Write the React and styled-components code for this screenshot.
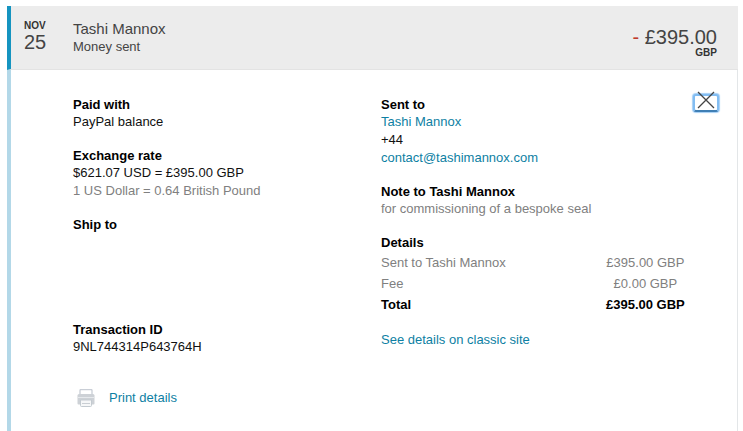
import React from 'react';
import styled, { createGlobalStyle } from 'styled-components';

const costs = [
    { label: 'Sent to Tashi Mannox', amount: '£395.00 GBP' },
    { label: 'Fee', amount: '£0.00 GBP' },
    { label: 'Total', amount: '£395.00 GBP', total: true },
];

const PrintIcon = () => (
    <svg width="18" height="18" viewBox="0 0 18 18" fill="none" aria-hidden="true">
        <path d="M3 5V1.5Q3 .5 4 .5H14Q15 .5 15 1.5V5" stroke="#c9ced6" strokeWidth="1.3" />
        <path d="M2 5H16Q17.5 5 17.5 6.5V14.5Q17.5 15.5 16.5 15.5H1.5Q.5 15.5 .5 14.5V6.5Q.5 5 2 5Z" fill="#cdd1d6" />
        <path d="M1 8.5H17" stroke="#e6e9ec" />
        <path d="M3.5 11H14.5V16.5Q14.5 17.5 13.5 17.5H4.5Q3.5 17.5 3.5 16.5Z" fill="#f6f7f8" stroke="#c3cad0" />
        <path d="M5 14.5H13" stroke="#c9ced3" />
    </svg>
);

const CloseIcon = () => (
    <svg width="18" height="18" viewBox="0 0 18 18" fill="none" aria-hidden="true">
        <path d="M1 1L17 17M17 1L1 17" stroke="#444" strokeWidth="1.3" />
    </svg>
);

const App = () => {
    return (
        <React.Fragment>
            <GlobalStyle />
            <Card>
                <Header>
                    <DateBox dateTime="11-25">
                        <Month>NOV</Month>
                        <Day>25</Day>
                    </DateBox>
                    <Summary>
                        <Name>Tashi Mannox</Name>
                        <Status>Money sent</Status>
                    </Summary>
                    <Amount>
                        <Price><Minus>-</Minus> £395.00</Price>
                        <Currency>GBP</Currency>
                    </Amount>
                </Header>
                <Body>
                    <Column>
                        <Block>
                            <Title>Paid with</Title>
                            <Text>PayPal balance</Text>
                        </Block>
                        <Block>
                            <Title>Exchange rate</Title>
                            <Text>$621.07 USD = £395.00 GBP</Text>
                            <Text $muted>1 US Dollar = 0.64 British Pound</Text>
                        </Block>
                        <AddressBlock>
                            <Title>Ship to</Title>
                        </AddressBlock>
                        <Block>
                            <Title>Transaction ID</Title>
                            <Text>9NL744314P643764H</Text>
                        </Block>
                        <PrintLink href="#print">
                            <PrintIcon />
                            Print details
                        </PrintLink>
                    </Column>
                    <Column>
                        <Block>
                            <Title>Sent to</Title>
                            <Text><Link href="#profile">Tashi Mannox</Link></Text>
                            <Text>+44</Text>
                            <Text><Link href="mailto:contact@tashimannox.com">contact@tashimannox.com</Link></Text>
                        </Block>
                        <Block>
                            <Title>Note to Tashi Mannox</Title>
                            <Text $muted>for commissioning of a bespoke seal</Text>
                        </Block>
                        <Block>
                            <Title>Details</Title>
                            <CostTable>
                                <tbody>
                                    {costs.map((cost) => (
                                        <CostRow key={cost.label} $total={cost.total}>
                                            <CostLabel scope="row">{cost.label}</CostLabel>
                                            <CostValue>{cost.amount}</CostValue>
                                        </CostRow>
                                    ))}
                                </tbody>
                            </CostTable>
                        </Block>
                        <Text><Link href="#classic">See details on classic site</Link></Text>
                    </Column>
                    <CloseBtn type="button" aria-label="Close">
                        <CloseIcon />
                    </CloseBtn>
                </Body>
            </Card>
        </React.Fragment>
    );
};

const GlobalStyle = createGlobalStyle`
    * {
        box-sizing: border-box;
    }
    body {
        margin: 0;
        background: #fff;
        color: #111;
        font-family: "Liberation Sans", Arial, sans-serif;
        font-size: 13px;
    }
    h2, h3, p {
        margin: 0;
    }
`
const Card = styled.article`
    display: flex;
    flex-direction: column;
    min-height: 100vh;
    padding: 6px 5px 0 7px;
`
const Header = styled.header`
    display: flex;
    padding: 14px 21px 10px 13px;
    border-left: 4px solid #1594c0;
    border-bottom: 1px solid #e3e3e3;
    background: #ececec;
    color: #444;
`
const DateBox = styled.time`
    width: 49px;
    flex: none;
`
const Month = styled.div`
    font-size: 10px;
    font-weight: bold;
    line-height: 12px;
    color: #333;
`
const Day = styled.div`
    font-size: 20px;
    line-height: 20px;
`
const Summary = styled.div`
    flex: 1;
`
const Name = styled.h2`
    font-size: 15px;
    font-weight: normal;
    line-height: 18px;
`
const Status = styled.p`
    line-height: 18px;
`
const Amount = styled.div`
    padding-top: 7px;
    text-align: right;
`
const Price = styled.div`
    font-size: 20px;
    line-height: 20px;
`
const Minus = styled.span`
    color: #c0392b;
`
const Currency = styled.div`
    font-size: 10px;
    font-weight: bold;
    line-height: 12px;
    color: #333;
`
const Body = styled.div`
    display: grid;
    grid-template-columns: 308px 1fr auto;
    align-items: start;
    flex: 1;
    padding: 26px 18px 16px 62px;
    border-left: 4px solid #b3d8e8;
    border-right: 1px solid #e3e6e8;
`
const Column = styled.div`
    min-width: 0;
`
const Block = styled.section`
    margin-bottom: 16px;
`
const AddressBlock = styled(Block)`
    min-height: 89px;
`
const Title = styled.h3`
    font-size: 13px;
    font-weight: bold;
    line-height: 17px;
    color: #000;
`
const Text = styled.p`
    line-height: 18px;
    color: ${({ $muted }) => ($muted ? '#808080' : '#111')};
`
const Link = styled.a`
    color: #0e7fa3;
    text-decoration: none;
`
const PrintLink = styled(Link)`
    display: inline-flex;
    align-items: center;
    gap: 14px;
    margin-top: 16px;
    padding-left: 4px;
    line-height: 20px;
`
const CostTable = styled.table`
    margin-top: 1px;
    border-collapse: collapse;
`
const CostRow = styled.tr`
    color: ${({ $total }) => ($total ? '#000' : '#808080')};
    font-weight: ${({ $total }) => ($total ? 'bold' : 'normal')};
`
const CostLabel = styled.th`
    width: 225px;
    padding: 0;
    font-weight: inherit;
    line-height: 21px;
    text-align: left;
`
const CostValue = styled.td`
    padding: 0;
    line-height: 21px;
    text-align: center;
`
const CloseBtn = styled.button`
    display: flex;
    align-items: flex-end;
    justify-content: center;
    width: 26px;
    height: 18px;
    margin-top: -2px;
    padding: 0;
    border: 2px solid #82bdf2;
    border-bottom-color: #3f7fb5;
    border-radius: 3px;
    background: #fff;
    box-shadow: 0 0 1px 1px #a5cff6;

    svg {
        flex: none;
        margin-bottom: 1px;
    }
`

export default App;
